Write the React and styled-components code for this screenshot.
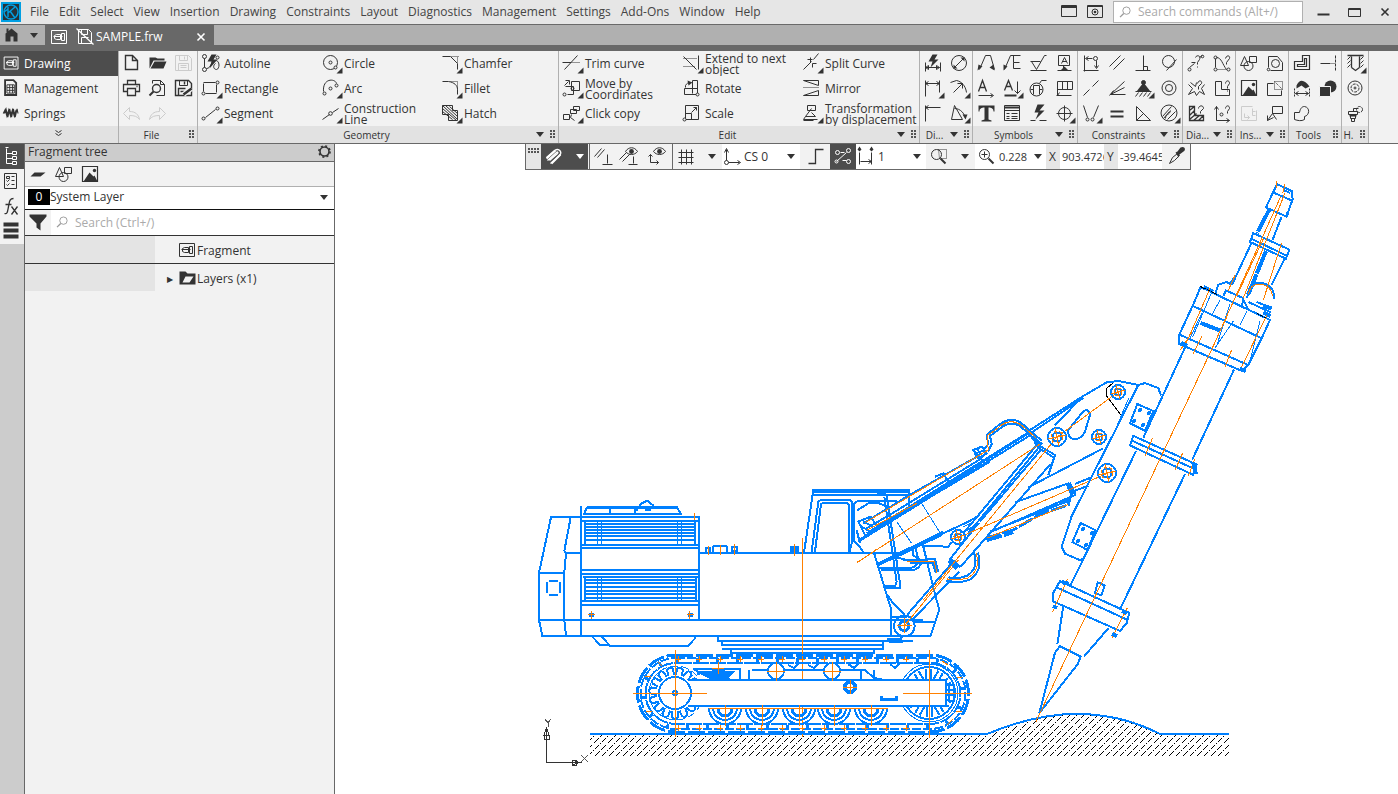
import React from "react";
import styled, { createGlobalStyle, css } from "styled-components";

const GlobalStyle = createGlobalStyle`
  * {
    box-sizing: border-box;
  }

  body {
    margin: 0;
    background: #fff;
    color: #333;
    font-family: "Open Sans", "Noto Sans", sans-serif;
    font-size: 12px;
    line-height: 16px;
  }

  button, input, select {
    margin: 0;
    padding: 0;
    border: 0;
    border-radius: 0;
    background: none;
    color: inherit;
    font: inherit;
  }
`;

/* Icons: every glyph is drawn on a 26 x 25 cell */

const solid = { fill: "currentColor", stroke: "none" };
const more = <path d="M25 17v6h-6z" {...solid} />;

const glyphs = {
  fragment: (
    <g>
      <path d="M5 6h15v13H5z M15 9h3v7h-3z M10 10h4v5h-4l-2-1v-3z" />
      <path d="M7 12h9" />
    </g>
  ),
  management: (
    <g>
      <path d="M6 4h9l3 3v13H6z" strokeWidth="2" />
      <path d="M8 9h8v9H8z M8 12h8 M8 15h8 M11 9v9 M14 9v9" />
    </g>
  ),
  springs: <path d="M5 13l2-5 2 9 2-9 2 9 2-9 2 9 2-9 1 5 M4 13l2-4 2 7 2-7 2 7 2-7 2 7 2-7" strokeWidth="1.2" />,
  home: <path d="M5 12l7-6 6 5v8h-4v-5h-3v5H6v-8z M7 6h2v4H7z" {...solid} />,
  chevrons: <path d="M10 5l3 2 3-2 M10 8l3 2 3-2" />,
  newDoc: <path d="M7 5h7l5 5v9H7z M14 5v5h5" strokeWidth="1.4" />,
  open: <path d="M5 7h6l2 1h7v2H9l-4 8z M10 11h12l-3 7H6z" {...solid} />,
  save: <path d="M5 5h13l3 3v12H5z M9 5v5h8V5 M14 6v3 M8 20v-7h10v7 M10 15h6 M10 17h6" />,
  print: <path d="M9 9V5h8v4 M9 16H5V9h16v7h-4 M9 13h8v7H9z M18 11h1" strokeWidth="1.3" />,
  preview: (
    <g>
      <path d="M8 8V5h8l4 4v11h-8 M16 5v4h4" />
      <circle cx="12" cy="13" r="4" strokeWidth="1.4" />
      <path d="M9 16l-4 4" strokeWidth="2" />
    </g>
  ),
  saveAs: (
    <g>
      <path d="M5 5h13l3 3v12H5z M8 20v-7h7" strokeWidth="1.4" />
      <path d="M9 5h8v5H9z" />
      <path d="M14 6v3 M10 16h4" strokeWidth="1.4" />
      <path d="M13 19l8-6" stroke="#f2f2f2" strokeWidth="5" />
      <path d="M13 19l8-6" strokeWidth="2.4" />
    </g>
  ),
  undo: <path d="M5 13l6-6v4c6 0 9 3 10 8-2-3-5-4-10-4v4z" />,
  redo: <path d="M21 13l-6-6v4c-6 0-9 3-10 8 2-3 5-4 10-4v4z" />,
  autoline: (
    <g>
      <circle cx="7" cy="6" r="2" /><circle cx="7" cy="19" r="2" /><circle cx="20" cy="7" r="1.5" />
      <path d="M7 8v9 M9 18c5 0 4-8 9-8s4 9 1 9-4-4-1-6" />
      <path d="M14 4h5l-3 5h4l-8 9 2-7h-4z" {...solid} />
    </g>
  ),
  rectangle: (
    <g>
      <path d="M6 7h12 M6 8v8 M19 9v8 M8 18h11" />
      <circle cx="20" cy="7" r="1.5" /><circle cx="6" cy="18" r="1.5" />{more}
    </g>
  ),
  segment: (
    <g>
      <path d="M8 17l10-8" />
      <circle cx="20" cy="8" r="1.5" /><circle cx="6" cy="18" r="1.5" />{more}
    </g>
  ),
  circle: (
    <g>
      <circle cx="13" cy="12" r="7" /><circle cx="13" cy="12" r="1.5" />
      <circle cx="18" cy="17" r="1.5" fill="#f2f2f2" />{more}
    </g>
  ),
  arc: (
    <g>
      <path d="M6 16c-1-14 12-13 13-8" /><circle cx="13" cy="13" r="1.5" />
      <circle cx="7" cy="18" r="1.5" /><circle cx="19" cy="10" r="1.5" />{more}
    </g>
  ),
  construction: (
    <g>
      <path d="M5 19l7-5 M15 12l6-4" /><circle cx="13" cy="13" r="1.8" />{more}
    </g>
  ),
  chamfer: (
    <g><path d="M5 6h8l7 7v6" /><path d="M14 6h7 M20 7v5" strokeDasharray="1 1" />{more}</g>
  ),
  fillet: (
    <g><path d="M5 6h6c6 1 9 4 9 8v5" /><path d="M13 6h7v8" strokeDasharray="1 1" />{more}</g>
  ),
  hatch: (
    <g>
      <path d="M5 5h10v5h5v10h-9v-6H5z" />
      <path d="M5 8l14 12 M5 11l10 8 M8 5l12 11 M12 6l8 7 M5 5l15 14" />{more}
    </g>
  ),
  trim: <g><path d="M6 19L19 5 M4 12h9" /><path d="M14 12h8" strokeDasharray="1 1" />{more}</g>,
  move: (
    <g>
      <path d="M13 6h8v9h-8z M7 11h8v8H9 M6 10l4-4 M7 5h4v4" />
      <circle cx="14" cy="13" r="1.5" /><circle cx="6" cy="19" r="1.5" />{more}
    </g>
  ),
  copy: (
    <g>
      <path d="M15 6h6v4h-6z M12 9h6v4h-6z M5 14h6v5H5z" />
      <path d="M13 14l-1 3 4 3" />{more}
    </g>
  ),
  extend: (
    <g>
      <path d="M5 6l13 13 M20 5v14" />
      <path d="M5 8h14 M5 16h12" strokeDasharray="1 1" />{more}
    </g>
  ),
  rotate: (
    <g>
      <path d="M14 5h5v14H6v-6h13 M14 5v13 M7 12v-2c1-2 3-3 4-3" />
      <circle cx="19" cy="19" r="1.5" fill="#f2f2f2" />
      <path d="M9 5l5 2-4 3z" {...solid} />
    </g>
  ),
  scale: (
    <g>
      <path d="M7 5h13v14H7z M7 13h6v6 M13 12l5-5 M15 7h3v3" />
      <circle cx="6" cy="19" r="1.5" fill="#f2f2f2" />
    </g>
  ),
  split: <g><path d="M5 19l8-8 M15 9l5-6 M9 9h5 M12 7v5 M14 17v-4h4" />{more}</g>,
  mirror: (
    <g>
      <path d="M5 5h15v5z M5 20h15v-5z" />
      <path d="M5 12h16" strokeDasharray="1 1" />
    </g>
  ),
  transform: (
    <g>
      <path d="M9 5h8v5H9z M13 8l-6 8h10l-4-4 M7 16l-2 3h14 M5 20h10" />{more}
    </g>
  ),
  dimAuto: (
    <g>
      <path d="M6 12v9 M21 12v9 M6 17h14 M6 17l3-2v4z M20 17l-3-2v4z" />
      <path d="M13 4h5l-3 5h4l-8 8 2-6H9z" {...solid} />
    </g>
  ),
  diameter: <g><circle cx="13.5" cy="12.5" r="7.5" /><path d="M8 18L19 7" /><path d="M8 18v-4l4 4z M19 7h-4l4 4z" {...solid} /></g>,
  dimLinear: <g><path d="M6 5v16 M20 5v12 M6 8h14 M9 6L6 8l3 2 M17 6l3 2-3 2" />{more}</g>,
  dimRadial: <g><path d="M5 7l6-2c5 1 9 5 10 12 M8 17l9-9 M12 8h5v5" />{more}</g>,
  dimBreak: <path d="M6 5v16 M6 7h15 M9 5L6 7l3 2" />,
  dimAngle: <g><path d="M6 19L9 5l8 14z M9 8c6 0 10 5 11 10" /><path d="M17 14l3 5 2-5z" {...solid} />{more}</g>,
  leader: <g><path d="M7 19L13 5h5l4 14" /><path d="M5 20l1-6 4 2z M22 20l-5-3 4-3z" {...solid} /></g>,
  leaderE: <g><path d="M6 19L12 5h10 M13 12h7 M15 5v14" stroke="none" /><path d="M6 19L12 5h10 M15 5v7h6 M15 12v6h7" /><path d="M5 20l0-6 4 2z" {...solid} /></g>,
  roughness: <path d="M6 11h10 M7 11l5 8 8-14h2 M6 20h16" />,
  datum: <g><path d="M8 5h11v10H8z M13 15v4 M7 20h14" /><path d="M11 13l3-6 3 6 M12 11h4" /><path d="M10 20l4-4 4 4z" {...solid} /></g>,
  textA: <g><path d="M6 16l4-11 4 11 M7 12h6" strokeWidth="1.3" /><path d="M6 20h14 M18 18l3 2-3 2" /></g>,
  textDown: <g><path d="M6 15l4-10 4 10 M7 11h6" strokeWidth="1.3" /><path d="M19 6v12 M16 15l3 3 3-3" /><path d="M6 19h12v2H6z" {...solid} />{more}</g>,
  balloon: <g><circle cx="12" cy="14" r="6.5" /><path d="M9 19v-9h6v9 M6 14h3 M15 14h3 M15 8l2-3h5" /></g>,
  flag: <path d="M7 20V6h15v8H7 M12 6v8 M17 6v8 M6 20h15 M9 17l-2 3h4" />,
  letterT: <path d="M6 5h16v6h-1c0-3-2-4-5-4v12l3 1v1H9v-1l3-1V7c-3 0-5 1-5 4H6z" {...solid} />,
  table: <g><path d="M6 5h15v15H6z M6 10h15 M8 13h3 M13 13h6 M8 16h3 M13 16h6 M8 18h3 M13 18h6" /><path d="M6 7h15" strokeWidth="2" /></g>,
  bolt: <g><path d="M13 4h7l-5 6h5l-9 9 3-7h-4z" {...solid} /><path d="M6 20h5 M15 20h7" /></g>,
  target: <g><circle cx="14" cy="13" r="6" /><path d="M6 13h16 M14 5v16" />{more}</g>,
  conAlign: <g><path d="M7 5v16 M6 20h15 M9 8h6 M11 6L8 8l3 2 M19 10v7 M17 15l2 3 2-3" /><circle cx="18" cy="8" r="2" /></g>,
  conParallel: <path d="M6 16L17 5 M10 19L21 8" />,
  conPerp: <path d="M14 5v15 M6 20h15 M14 16h4v4" />,
  conTangent: <g><circle cx="13" cy="11" r="6" /><path d="M11 20L21 9" /></g>,
  conCollinear: <path d="M6 20l6-6 M15 11l6-6" />,
  conFan: <path d="M21 6L7 19h15 M21 12L7 19 M10 15l-4 5" />,
  conFix: <g><path d="M14 7l7 9H7z" {...solid} /><circle cx="14" cy="7" r="2" fill="#333" /><path d="M6 16h16 M9 17l-3 4 M13 17l-3 4 M17 17l-3 4 M21 17l-3 4" />{more}</g>,
  conCircles: <g><circle cx="13.5" cy="12.5" r="7" /><circle cx="13.5" cy="12.5" r="3.5" /></g>,
  conEnds: <g><path d="M6 5l4 12 M21 5l-5 12" /><circle cx="10" cy="19" r="1.5" /><circle cx="15" cy="19" r="1.5" />{more}</g>,
  conEqual: <path d="M7 10h13v2H7z M7 15h13v2H7z" {...solid} />,
  conTriangle: <path d="M7 6v14h14z M7 20l7-7" />,
  conHatch: <g><circle cx="13.5" cy="12.5" r="8" /><path d="M7 16l9-10 M8 18l6-7 M12 19l8-8 M10 18c0-5 4-3 5-8" />{more}</g>,
  diaLine: <g><path d="M7 17l5-4 M9 12h4 M17 7l3-2 M13 7c1-3 6-2 4 2l-2 3v2 M15 16v1" /><circle cx="7" cy="19" r="1.5" /><circle cx="20" cy="6" r="1.3" /></g>,
  diaPoly: <g><path d="M7 8v9 M8 7c5 0 6 7 10 12 M17 8c1-4 5-3 4 0l-3 4v2" /><circle cx="7" cy="7" r="1.5" /><circle cx="7" cy="19" r="1.5" /><circle cx="20" cy="19" r="1.5" /><path d="M9 19h9" strokeDasharray="1 1" /></g>,
  diaStar: <path d="M8 7l5 4 1-4 M6 9l4 4-4 6 6-3 2 4 3-4 5 3-3-6 3-4 M15 8c1-4 5-3 4 0l-3 3v3" />,
  diaArea: <path d="M7 6h6v8h8v6H7z M17 8c0-3 4-4 4 0l-2 3v2 M19 15v1" />,
  diaHatch: <g><path d="M7 6h5v9h9v5H7z M7 10l5-4 M7 15l5-5 M7 19l7-6 M11 20l6-5 M16 20l5-5" strokeWidth="1.3" /><path d="M16 8c0-3 5-4 5 0l-3 3v2" /></g>,
  diaAxis: <g><path d="M8 6v14h13 M6 9l2-3 2 3 M18 18l3 2-3 2 M17 8c0-3 4-4 4 0l-2 3v2" /><circle cx="13" cy="14" r="1.5" /></g>,
  shapes: <g><path d="M9 6l4 9H5z M14 6h7v6h-7z" /><circle cx="13" cy="15.5" r="4.5" /></g>,
  insView: <g><circle cx="14" cy="13" r="4" /><path d="M7 17V6h9l5 6v8H9" /><circle cx="7" cy="19" r="1.3" /></g>,
  picture: <g><path d="M6 5h15v15H6z" strokeWidth="1.2" /><path d="M7 20l6-9 4 4 1-1 3 6z" {...solid} /><circle cx="18" cy="9" r="1.7" {...solid} /></g>,
  insRegion: <g><path d="M12 8H6v12h14v-5" /><path d="M13 6h8v8h-8z M13 6l8 8" strokeDasharray="1 1" /></g>,
  insLayout: <g><path d="M6 6h11 M6 6v14h15V10" /><path d="M9 13v4h5 M12 15l2 2-2 2 M17 8v7h3 M17 11h3" /></g>,
  insCallout: <path d="M11 6h10v7H11z M11 13l-5 7 M11 13l4 6 M6 15v5l6-3" />,
  toolOffset: <path d="M14 5h7v14H6v-8h8z M16 8h2v8H9v-2h7z" strokeWidth="1.2" />,
  toolAxis: <g><path d="M6 13h10" /><path d="M17 13h4" strokeDasharray="1 1" /><path d="M21 5v15" strokeDasharray="3 1" /></g>,
  toolDims: <g><path d="M8 10c3-7 8-6 13 1l-4 2-4-3-5 3z" {...solid} /><path d="M6 13v8 M21 13v8" strokeDasharray="2 1" /><path d="M7 18h13 M10 16l-3 2 3 2 M17 16l3 2-3 2" /></g>,
  toolBool: <g><circle cx="16" cy="11" r="6" {...solid} /><path d="M5 11h11v10H5z" stroke="#f2f2f2" fill="#333" /></g>,
  toolContour: <path d="M6 12h5c1-5 3-6 5-6 6 1 5 9 0 10v3c-3 2-7 1-10 0z" />,
  holeHatch: <g><path d="M6 5h16 M10 6v11 M18 6v11 M10 17l4 3 4-3" strokeWidth="1.3" /><path d="M6 9l3-3 M6 13l3-3 M6 17l3-3 M19 9l3-3 M19 13l3-3 M19 17l3-3" />{more}</g>,
  holeTop: <g><circle cx="13.5" cy="12.5" r="7" /><circle cx="13.5" cy="12.5" r="4" strokeDasharray="3 1" /><path d="M13.5 11v3 M12 12.5h3" /></g>,
  holeBolt: <g><path d="M7 11h9v3H7z M9 14v4h5v-4 M10 18v3h3v-3 M12 11V8h5" /><circle cx="18" cy="9" r="3" strokeDasharray="3 1" /><path d="M8 15h7" strokeWidth="2" /></g>,
  tree: <path d="M6 4v15h6 M6 9h6 M6 14h6 M5 3h3 M12 7h4v3h-4z M12 12h4v3h-4z M12 17h4v3h-4z" transform="translate(1 1)" />,
  props: <path d="M5 5h12v15H5z M7 8h3v2H7z M12 8h3 M12 12h3 M12 16h3 M7 12l1 1 2-2 M7 16l1 1 2-2" />,
  fx: <g><path d="M5 20c3 1 3-2 4-7s1-8 5-8 M6 11h6" strokeWidth="1.3" /><path d="M12 13l6 8 M18 13l-6 8" strokeWidth="1.3" /></g>,
  menu: <path d="M4 4h15v4H4z M4 10h15v4H4z M4 16h15v4H4z" {...solid} />,
  layer: <path d="M6 15l4-4h11l-5 4z" {...solid} />,
  funnel: <path d="M5 5h17v2l-6 7v7l-4-3v-4L5 7z" {...solid} />,
  folder: <g><path d="M5 6h6l2 2h8v11H5z" {...solid} /><path d="M11 11h8l-4 6H8z" fill="#f2f2f2" stroke="none" /></g>,
  magnet: <g><path d="M6 14l8-7c5-3 8 2 5 5l-9 8 M9 17l8-7c1-1 0-2-1-1l-9 8" strokeWidth="1.3" /><path d="M6 15l9-8 M11 20l9-9" strokeWidth="2" /></g>,
  parPerp: <path d="M5 13l7-8 M8 14l7-8 M18 11v9 M13 21h10" />,
  eyePar: <g><path d="M4 16l8-8 M7 18l8-8 M18 13v7 M13 21h9" /><path d="M10 8c3-5 9-5 12 0-3 4-9 4-12 0z" fill="#f2f2f2" /><circle cx="16" cy="8" r="2.4" {...solid} /></g>,
  eyeAxis: <g><path d="M7 11v8h8 M5 13l2-2 2 2 M13 17l2 2-2 2" /><path d="M10 8c3-5 9-5 12 0-3 4-9 4-12 0z" /><circle cx="16" cy="8" r="2.4" {...solid} /></g>,
  grid: <path d="M6 9h15 M6 14h15 M6 19h15 M9 6v15 M14 6v15 M19 6v15" />,
  axes: <g><path d="M7 6v11 M9 19h11 M5 9l2-4 2 4 M18 17l3 2-3 2" /><circle cx="7" cy="19" r="2" /></g>,
  step: <path d="M5 20h7V6h8" strokeWidth="1.3" />,
  snaps: <g><circle cx="8" cy="9" r="2" /><circle cx="19" cy="7" r="2" /><circle cx="19" cy="18" r="2" /><path d="M7 18l10-9 M13 17h4 M11 9h4" /><circle cx="7" cy="18" r="1.5" /></g>,
  pitch: <g><path d="M6 9v12 M18 9v12 M7 18h11 M15 16l3 2-3 2" /><path d="M6 3l2 3-2 2-2-2z M18 3l2 3-2 2-2-2z" {...solid} /></g>,
  zoomArea: <g><circle cx="11" cy="11" r="5" /><path d="M15 15l5 5" strokeWidth="2" /><path d="M13 6h8v9h-7z" strokeDasharray="1 1" /></g>,
  zoomIn: <g><circle cx="12" cy="11" r="5" /><path d="M12 8v6 M9 11h6" /><path d="M16 15l5 5" strokeWidth="2" /></g>,
  dropper: <g><path d="M6 20l3-6 5-4 2 2-5 5z" /><path d="M12 9l2-1 3-4c4-2 6 2 3 4l-4 3-1 3z" {...solid} /></g>,
  search: <g><circle cx="14" cy="11" r="4" /><path d="M11 14l-4 4" strokeWidth="1.4" /></g>,
  gear: <g><circle cx="13" cy="12" r="4.5" strokeWidth="1.6" /><circle cx="13" cy="12" r="5.6" strokeWidth="1.6" strokeDasharray="2 2.4" /></g>,
  unsaved: <g><path d="M6 5h10l3 3v11H6z M9 5v5h6V5 M9 19v-6h7" /><path d="M4 4l17 16" strokeWidth="1.2" /></g>,
  window: <path d="M6 6h15v11H6z M6 7h15 M6 8h15" />,
  windowEye: <g><path d="M6 6h15v12H6z M6 7h15" /><circle cx="13.5" cy="12.5" r="3" /><circle cx="13.5" cy="12.5" r="1.3" {...solid} /></g>,
  minimize: <path d="M8 14h12v2H8z" {...solid} />,
  maximize: <path d="M8 9h12v8H8z M8 10h12" />,
  close: <path d="M10 9l7 7 M17 9l-7 7" strokeWidth="1.6" />
};

const Glyph = styled.svg`
  display: block;
  flex: none;
  width: 26px;
  height: 25px;
  fill: none;
  stroke: currentColor;
`;

function Icon({ name }) {
  return (
    <Glyph viewBox="0 0 26 25" aria-hidden="true">
      <g transform="translate(-.5 -.5)">{glyphs[name]}</g>
    </Glyph>
  );
}

const Caret = styled.span`
  flex: none;
  width: 0;
  height: 0;
  margin: 0 1px;
  border: solid transparent;
  border-width: 5px 4px 0;
  border-top-color: currentColor;
`;

/* Window frame */

const Page = styled.div`
  display: flex;
  flex-direction: column;
  min-height: 100vh;
`;

const MenuBar = styled.header`
  display: flex;
  align-items: center;
  height: 25px;
  background: #e6e6e6;
  border-bottom: 1px solid #6a6a6a;
`;

const Logo = styled.svg`
  flex: none;
  width: 20px;
  height: 20px;
  margin: 0 9px 0 1px;
`;

const MenuList = styled.nav`
  display: flex;
  flex: 1;
  gap: 10px;
  color: #444;
  white-space: nowrap;
`;

const SearchField = styled.label`
  display: flex;
  align-items: center;
  height: ${props => (props.$framed ? "22px" : "25px")};
  width: ${props => (props.$framed ? "190px" : "auto")};
  flex: ${props => (props.$framed ? "none" : "1")};
  border: ${props => (props.$framed ? "1px solid #b0b0b0" : "0")};
  background: #fff;
  color: #999;

  svg {
    width: 24px;
    height: 23px;
  }

  input {
    flex: 1;
    min-width: 0;
    outline: 0;
  }

  input::placeholder {
    color: #aaa;
    opacity: 1;
  }
`;

const WindowButtons = styled.div`
  display: flex;
  gap: ${props => props.$gap || "0"};
  margin-left: ${props => props.$before || "0"};
  margin-right: ${props => props.$after || "0"};
`;

const TabStrip = styled.div`
  display: flex;
  height: 26px;
  background: #b0b0b0;
  border-bottom: 6px solid #686868;
`;

const HomeButton = styled.button`
  display: flex;
  align-items: center;
  gap: 3px;
  width: 45px;
  height: 20px;
`;

const Tab = styled.div`
  display: flex;
  align-items: center;
  width: 169px;
  height: 24px;
  padding-left: 2px;
  background: #686868;
  color: #fff;

  span {
    flex: 1;
    margin-left: -3px;
  }
`;

/* Ribbon */

const Ribbon = styled.div`
  display: flex;
  height: 93px;
  background: #f2f2f2;
  border-bottom: 1px solid #686868;
`;

const Modes = styled.div`
  display: flex;
  flex-direction: column;
  width: 119px;
  border-right: 1px solid #b0b0b0;
`;

const ModeButton = styled.button`
  display: flex;
  align-items: center;
  height: 25px;
  line-height: 14px;
  color: ${props => (props.$active ? "#fff" : "#333")};
  background: ${props => (props.$active ? "#4d4d4d" : "transparent")};

  svg {
    width: 24px;
  }
`;

const ModeMore = styled.button`
  display: flex;
  justify-content: center;
  height: 17px;
  background: #e2e2e2;
  overflow: hidden;
`;

const Group = styled.section`
  display: flex;
  flex-direction: column;
  border-right: 1px solid #b0b0b0;
`;

const Tools = styled.div`
  display: grid;
  grid-template-columns: repeat(${props => props.$columns}, ${props => (props.$wide ? "120px" : "26px")});
  grid-template-rows: repeat(3, 25px);
`;

const ToolButton = styled.button`
  display: flex;
  align-items: center;
  overflow: hidden;
  color: ${props => (props.$muted ? "#ccc" : "#333")};
  text-align: left;
  line-height: 11px;
  white-space: pre;
`;

const GroupFooter = styled.footer`
  display: flex;
  align-items: center;
  height: 17px;
  padding-right: 3px;
  background: #e2e2e2;
  font-size: 10px;

  span:first-child {
    flex: 1;
    min-width: 0;
    text-align: center;
  }
`;

const Grip = styled.i`
  flex: none;
  width: ${props => (props.$flat ? "11px" : "5px")};
  height: ${props => (props.$flat ? "5px" : "9px")};
  margin-left: ${props => (props.$flat ? "0" : "5px")};
  background: radial-gradient(circle at 1px 1px, #555 1px, transparent 1px) 0 0 / 3px 3px;
`;

/* Side panel */

const Workspace = styled.div`
  display: flex;
  flex: 1;
`;

const SideStrip = styled.div`
  width: 25px;
  background: #ccc;
  border-right: 1px solid #686868;
`;

const SideButton = styled.button`
  display: block;
  width: 24px;
  height: 25px;
  overflow: hidden;
  color: ${props => (props.$active ? "#fff" : "#333")};
  background: ${props => (props.$active ? "#4d4d4d" : "#f2f2f2")};
`;

const Panel = styled.aside`
  width: 310px;
  background: #f2f2f2;
  border-right: 1px solid #686868;
`;

const PanelTitle = styled.h2`
  display: flex;
  align-items: center;
  justify-content: space-between;
  height: 18px;
  margin: 0;
  padding: 0 0 1px 3px;
  overflow: hidden;
  background: #ccc;
  border-bottom: 1px solid #686868;
  font-size: 12px;
  font-weight: 400;

  button {
    margin-right: -4px;
  }
`;

const PanelTools = styled.div`
  display: flex;
  height: 24px;
`;

const LayerPicker = styled.label`
  display: flex;
  align-items: center;
  height: 24px;
  padding: 0 5px 2px 3px;
  background: #fff;
  border-top: 1px solid #b0b0b0;
  border-bottom: 1px solid #111;
`;

const LayerNumber = styled.span`
  width: 22px;
  height: 16px;
  background: #000;
  color: #fff;
  text-align: center;
`;

const Select = styled.select`
  appearance: none;
  flex: 1;
  min-width: 0;
  outline: 0;
`;

const FilterRow = styled.div`
  display: flex;
  height: 26px;
  border-bottom: 1px solid #333;
`;

const TreeRow = styled.div`
  display: grid;
  grid-template-columns: 130px 1fr;
  height: ${props => (props.$ruled ? "28px" : "27px")};
  background: #e4e4e4;
  border-bottom: 1px solid ${props => (props.$ruled ? "#333" : "#e4e4e4")};
`;

const TreeItem = styled.div`
  display: flex;
  grid-column: 2;
  align-items: center;
  padding-top: 2px;
  padding-left: ${props => (props.$leaf ? "20px" : "0")};
  background: #f2f2f2;

  svg {
    margin-right: -4px;
  }
`;

const Expander = styled.button`
  width: 20px;
  padding-left: 10px;
  font-size: 8px;
`;

/* Canvas */

const Canvas = styled.main`
  position: relative;
  flex: 1;
  min-width: 0;
  background: #fff;
`;

const QuickBar = styled.div`
  position: absolute;
  top: 0;
  left: 190px;
  display: flex;
  height: 26px;
  background: #f2f2f2;
  border: solid #686868;
  border-width: 0 1px 1px;
`;

const QuickButton = styled.button`
  display: flex;
  align-items: center;
  width: ${props => props.$width || "26px"};
  padding-left: ${props => props.$pad || "0"};
  gap: 8px;
  overflow: hidden;

  ${props =>
    props.$active &&
    css`
      background: #4d4d4d;
      color: #fff;
    `}
`;

const QuickDivider = styled.i`
  width: 1px;
  margin-left: ${props => (props.$apart ? "1px" : "0")};
  background: #686868;
`;

const QuickGrip = styled.div`
  width: 15px;
  padding: 4px 2px;
  background: #e6e6e6;
`;

const QuickField = styled.label`
  display: flex;
  align-items: center;
  width: ${props => props.$width};
  padding-right: 4px;
  background: #fff;

  svg {
    margin: 0 -2px;
  }
`;

const Coordinate = styled.label`
  display: flex;
  align-items: center;
  padding-left: 3px;
  gap: 3px;
  background: #e6e6e6;

  span {
    width: 8px;
  }

  input {
    width: 44px;
    height: 25px;
    padding-left: 2px;
    background: #fff;
    font-size: 11px;
  }
`;

const ZoomInput = styled.input`
  width: 28px;
  margin-left: 2px;
  margin-right: 6px;
  font-size: 11px;
`;

const Sheet = styled.svg`
  display: block;
  width: 100%;
  fill: none;
  stroke: #0080ff;
  stroke-width: 2;
  shape-rendering: crispEdges;

  path, circle, ellipse {
    vector-effect: non-scaling-stroke;
  }
`;

const Axis = styled.g`
  stroke: #ff8000;
  stroke-width: 1;
`;

const Fine = styled.g`
  stroke-width: 1;
`;

function Ring({ x, y, r }) {
  return (
    <g>
      <circle cx={x} cy={y} r={r} />
      <circle cx={x} cy={y} r={r / 2} />
      <Axis>
        <path d={`M${x - r} ${y + 2}L${x + r} ${y - 2}M${x - 2} ${y - r}L${x + 2} ${y + r}`} />
        <circle cx={x} cy={y} r={r - 3} strokeDasharray="3 3" />
      </Axis>
    </g>
  );
}

function Ground() {
  const lines = [];
  for (let x = 560; x < 1240; x += 7) {
    lines.push(
      <path key={x} d={`M${x} 756L${x + 44} 712`} strokeDasharray={x % 2 ? "7 2" : "5 2 1 2"} />
    );
  }
  return (
    <g>
      <clipPath id="soil">
        <path d="M590 734H987Q1060 708 1100 715Q1135 718 1160 734H1229V756H590z" />
      </clipPath>
      <g clipPath="url(#soil)" stroke="#000" strokeWidth="1">{lines}</g>
      <path d="M590 734H987C1025 718 1060 713 1085 714C1118 716 1140 724 1160 734H1229" />
    </g>
  );
}

function Engine() {
  return (
    <g transform="translate(530 480) scale(.3333)">
      <path d="M152 112H63L27 278V420L37 467H1180 M152 78V467 M122 112L103 212L108 219H155 M108 219L103 278V420L108 467 M27 278H103 M27 420H1180" />
      <path d="M152 112H508V420 M508 219H1120 M155 195H508 M155 204H508 M155 122H508 M155 270H508 M155 281H508 M155 363H508 M155 375H508" />
      <path d="M165 122V195 M495 122V195 M165 290V363 M497 290V363 M158 290H508" />
      <path d="M165 132H495 M165 141H495 M165 150H495 M165 159H495 M165 169H495 M165 179H495 M165 301H497 M165 310H497 M165 322H497 M165 332H497 M165 343H497 M165 353H497" />
      <Fine>
        <path d="M203 122V195 M215 122V195 M444 122V195 M454 122V195 M203 290V363 M215 290V363 M444 290V363 M454 290V363" />
      </Fine>
      <path d="M170 83H444" strokeWidth="3" />
      <path d="M170 82L163 102 M440 82L455 105 M160 102H455 M240 82V102 M314 82V99 M322 82V92 M325 82L335 70L352 62L368 75V82 M345 90H362" />
      <path d="M58 302H84 M51 307V340 M90 307V340 M58 345H84" />
      <path d="M187 470L210 495H238L215 470 M238 497H475L498 472" />
      <path d="M565 470V482H1150 M577 482V494H1058V482 M577 506H1058V494 M604 507V519H1032V507 M650 482H1148" />
      <path d="M527 218V204H540V218 M550 218V200L556 197H588L592 203V218 M605 200H622V214H605z" />
      <path d="M178 406H192 M474 406H488" strokeWidth="4" />
      <Axis>
        <path d="M173 405H196 M184 394V416 M470 405H492 M480 394V416 M535 197V224 M572 194V224 M613 192V224 M495 98V120" />
      </Axis>
    </g>
  );
}

function Cabin() {
  return (
    <g transform="translate(750 480) scale(.3333)">
      <path d="M162 218L190 30H476V90 M188 37H476 M188 44H480 M162 218H372L424 390V467H542L568 390L555 342L520 200" />
      <path d="M185 215L205 65L213 59H298L305 66V190L298 217 M195 215L213 72L220 68H290L296 74V215 M313 185V70L325 62H440 M320 92L355 70Q390 62 410 84 M313 185L325 195L340 216" />
      <path d="M380 44Q395 32 410 46L450 310V325H405 M403 50L440 305L436 318H403" />
      <path d="M390 263H470Q500 268 505 240L497 205 M392 271H480Q512 270 515 242L488 225V205 M440 232L470 240" />
      <path d="M408 340L430 370L465 405 M424 410H470 M495 427H555 M412 478H448L458 470" />
      <path d="M412 476H456 M418 486H460" />
      <path d="M605 250L472 404 M628 274L488 418" />
      <path d="M125 205H142V215H125z M128 210H140" strokeWidth="4" />
      <circle cx="463" cy="438" r="31" />
      <circle cx="463" cy="438" r="14" strokeWidth="3" />
      <Axis>
        <path d="M157 175V770 M133 192V227 M440 438H486 M463 415V460 M322 248L380 208 M625 240L463 438" />
      </Axis>
    </g>
  );
}

const rollers = [725, 762, 799, 834, 871];
const links = [678, 699, 720, 740, 761, 782, 802, 824, 844, 865, 886, 906];

function around(count, x, y, d) {
  return Array.from({ length: count }, (_, i) => (
    <path key={i} d={d} transform={`translate(${x} ${y}) rotate(${(i * 360) / count})`} />
  ));
}

function Tracks() {
  return (
    <g>
      <path d="M676 655H930A38 38 0 0 1 930 732H676A38 38 0 0 1 676 655z" strokeWidth="3" strokeDasharray="17 3" />
      <path d="M676 658H930A35 35 0 0 1 930 729H676A35 35 0 0 1 676 658z" strokeDasharray="9 2" />
      <path d="M676 663H930A30 30 0 0 1 930 724H676A30 30 0 0 1 676 663z" strokeDasharray="16 1" />
      <path d="M676 660H930A33 33 0 0 1 930 727H676A33 33 0 0 1 676 660z" strokeWidth="5" strokeDasharray="3 17" />
      <circle cx="676" cy="693" r="27" strokeWidth="1" strokeDasharray="8 3" />
      {around(15, 675, 693, "M-3 18V24Q0 28 3 24V18")}
      <path d="M688 680H944V706H688" fill="#fff" />
      <circle cx="675" cy="693" r="16" fill="#fff" />
      <circle cx="675" cy="693" r="2" />
      <circle cx="929" cy="693" r="29" strokeWidth="1" />
      <circle cx="929" cy="693" r="26" />
      {around(12, 929, 693, "M-2 10V24 M3 10V24")}
      <path d="M890 681H946V705H890z" fill="#fff" stroke="none" />
      <path d="M880 680H946V706H880 M949 685H954V701H949z" />
      {rollers.map(x => (
        <g key={x}>
          <path d={`M${x - 16} 708A16 16 0 0 0 ${x + 16} 708`} />
          <path d={`M${x - 12} 708A12 12 0 0 0 ${x + 12} 708`} />
          <path d={`M${x - 7} 709A7 7 0 0 0 ${x + 7} 709`} strokeWidth="3" />
        </g>
      ))}
      <path d="M693 669L710 678L730 679 M694 669H740V680 M749 670V680 M752 670H865L874 678 M861 671V680 M874 670V678L884 680 M697 674L728 669" />
      <path d="M700 672H733L728 677H710z" fill="#0080ff" />
      {[776, 832].map(x => <circle key={x} cx={x} cy="671" r="8" fill="#fff" />)}
      <path d="M788 665L794 668L798 664 M808 665L814 668L818 664 M848 664L854 668L858 664 M890 664L895 668L899 664" />
      <circle cx="850" cy="687" r="5" strokeWidth="4" />
      <path d="M881 696V699H896V696" strokeWidth="3" />
      <Axis>
        <path d="M633 693H707 M675 650V737 M903 693H972 M929 650V738 M709 708H888 M767 671H785 M776 662V681 M823 671H841 M832 662V681 M718 662V674 M712 668H724 M843 687H857 M850 680V694" />
        {rollers.map(x => <path key={x} d={`M${x} 705V726`} />)}
        {links.map(x => (
          <path key={x} d={`M${x} 656V662 M${x - 3} 659H${x + 3} M${x} 725V731 M${x - 3} 728H${x + 3}`} />
        ))}
        <path d="M643 693H651 M645 676H651 M646 711H652 M658 662L662 666 M942 661L948 665 M957 677H962 M960 693H968 M956 711H962 M947 725L953 719" />
      </Axis>
    </g>
  );
}

function Boom() {
  return (
    <g>
      <g transform="translate(840 370) scale(.3333)">
        <path d="M570 180L730 78L800 37L835 33L895 45 M575 187L730 84 M730 78L645 165" />
        <path d="M60 508L565 190 M55 515L570 196 M70 460L160 405L200 380L420 255 M75 478L160 428L420 268 M80 490L570 184 M120 470L450 275" />
        <path d="M55 455L92 440L115 475L78 500z M70 455L100 470 M62 468L90 485 M50 480L60 520 M285 320L310 310L330 345 M405 245L430 275" />
        <path d="M400 240L425 230L440 250L415 265z M410 236L430 262 M403 252L430 242" />
        <path d="M115 580L310 485 M115 586L310 490 M150 570L305 495 M310 490L385 455L420 435" />
        <path d="M245 528L325 530L335 515 M565 352L790 235 M625 315L645 255L590 222L570 195 M598 235L640 262" />
        <path d="M590 225L370 490 M597 232L385 490 M604 238L420 455" />
        <path d="M580 205L605 225 M585 215L600 235" strokeWidth="4" />
        <path d="M632 282L362 590 M415 460L332 565L362 592" />
        <path d="M330 565L355 590 M326 572L350 596" strokeWidth="3" />
        <path d="M525 397L685 340L705 375L450 487 M690 338L706 372 M680 342L695 378 M705 342L752 323 M705 362L745 347 M450 485L685 393" />
        <path d="M685 345L702 372" strokeWidth="4" />
        <path d="M435 505L520 480L600 433L685 405L688 390L640 405 M440 512L520 488" strokeWidth="3" strokeDasharray="16 2" />
        <path d="M430 240L445 222L440 195L470 170Q510 135 545 160L605 212 M445 245L455 222L450 198L478 177Q510 150 540 168L600 220" />
        <path d="M402 548Q418 595 380 618Q350 628 325 622 M414 548Q430 605 388 630Q350 642 318 632" />
        <path d="M190 570L285 568L295 605 M210 580L278 578L288 610" />
        <path d="M685 180L728 126Q745 112 750 135L735 185Q722 210 700 208Q682 200 685 180z" />
        <Fine>
          <path d="M245 400L300 488 M170 455L215 520 M830 170L866 85 M340 500L420 460 M370 470L400 455 M375 485L405 470" />
          <path d="M820 38L800 55L798 75L842 134" stroke="#000" />
        </Fine>
        <Axis>
          <path d="M50 578L600 222 M650 202L833 67 M650 202L250 690 M350 505L802 310 M75 458L445 240L441 198L476 172Q510 142 545 166L590 205 M82 480L230 400 M440 505L685 403 M408 550Q424 600 384 624Q350 634 322 627 M200 574H282L291 608" />
        </Axis>
      </g>
      <Ring x={1118} y={392} r={7} />
      <Ring x={1057} y={437} r={9} />
      <Ring x={1099} y={437} r={7} />
      <Ring x={1107} y={473} r={9} />
      <Ring x={958} y={537} r={7} />
    </g>
  );
}

function Drill() {
  return (
    <g>
      <g transform="translate(1030 170) scale(.3333 .3825)">
        <path d="M325 562L345 557L385 570L393 590 M325 562L125 905L95 985L105 1003L150 1020L162 1016" />
        <path d="M470 455L340 700 M318 735L122 1085 M612 522L487 757 M465 795L272 1145" />
        <path d="M310 695L500 770L490 797L300 720z M307 708L497 783" />
        <path d="M90 1075L298 1158L290 1185L270 1205L70 1128V1105z M82 1092L290 1175" />
        <path d="M100 1140L82 1240 M235 1198L162 1272 M90 1245L152 1272L143 1292L28 1420L75 1262z" />
        <path d="M203 1078L224 1086L214 1112L195 1106z" />
        <path d="M322 612L370 630L345 682L300 662z M152 923L197 942L172 993L127 973z" />
        <path d="M512 306L720 392L695 440L488 355z M488 355L448 430V455L635 525L655 510L695 440 M448 430L655 510 M540 318L720 392" />
        <path d="M545 320L488 437 M515 375L480 440 M570 340L545 380 M600 350L560 460 M650 370L630 405 M690 395L660 500 M610 395L555 465" strokeWidth="1" />
        <path d="M512 400L572 420" strokeWidth="4" />
        <path d="M520 306L550 318 M700 372L722 382 M700 355L725 362" strokeWidth="4" />
        <path d="M555 325L565 300L590 293L605 300 M580 330L588 315L640 335L635 360 M600 298L615 278 M652 335Q655 292 690 295Q735 298 732 338 M655 345L722 372 M680 345L722 360 M640 340L655 365" />
        <path d="M665 190L606 300 M765 230L725 300 M755 122L728 182" />
        <path d="M708 212L655 325 M717 105L682 165" strokeWidth="4" strokeDasharray="24 1" />
        <path d="M670 165L778 208L768 232L660 188z M665 180L770 224" />
        <path d="M742 37L785 55L788 76L770 122L708 98L730 57z M728 58L786 80 M760 52L780 60 M768 112L776 116" />
        <Axis>
          <path d="M18 1442L550 460L752 70 M565 430L590 385 M640 335L765 60 M465 460L540 310 M635 515L710 380 M620 330L700 180 M700 340L755 190 M595 315L615 275" />
          <path d="M345 748L368 700 M435 785L458 740 M475 800L495 755 M68 1155L112 1070 M245 1225L292 1145 M452 470L485 425 M490 480L515 435 M585 515L605 470 M740 30V48 M765 38L758 60 M655 325Q660 298 690 299Q722 300 728 330" />
        </Axis>
        <path d="M510 304L560 325 M680 375L710 388" stroke="#000" strokeWidth="1" strokeDasharray="3 1" />
      </g>
      {[[1140, 410], [1149, 413], [1134, 421], [1143, 425], [1083, 529], [1092, 533], [1078, 541], [1086, 545]].map(
        ([x, y]) => <circle key={`${x}-${y}`} cx={x} cy={y} r="1" />
      )}
      <path d="M1053 606L1057 608 M1112 634L1117 636 M1062 582L1069 584 M1122 611L1127 613 M1181 343L1186 345 M1240 369L1246 371 M1193 462L1196 474" strokeWidth="4" />
    </g>
  );
}

function Origin() {
  return (
    <g stroke="#333" strokeWidth="1">
      <path d="M546.5 729V762.5H581 M544 735L546.5 728L549 735z M572 760L580 762.5L572 765z M544 735h5v4h-5z M572 760h4v5h-4z" />
      <path d="M581 755L588 762 M588 755L581 762 M545 719L548 723V727 M551 719L548 723" stroke="#555" />
    </g>
  );
}

const menus = [
  "File", "Edit", "Select", "View", "Insertion", "Drawing", "Constraints", "Layout",
  "Diagnostics", "Management", "Settings", "Add-Ons", "Window", "Help"
];

const groups = [
  {
    label: "File", columns: 3,
    tools: [["newDoc"], ["open"], ["save", "", true], ["print"], ["preview"], ["saveAs"], ["undo", "", true], ["redo", "", true]]
  },
  {
    label: "Geometry", columns: 3, wide: true, expand: true,
    tools: [
      ["autoline", "Autoline"], ["circle", "Circle"], ["chamfer", "Chamfer"],
      ["rectangle", "Rectangle"], ["arc", "Arc"], ["fillet", "Fillet"],
      ["segment", "Segment"], ["construction", "Construction\nLine"], ["hatch", "Hatch"]
    ]
  },
  {
    label: "Edit", columns: 3, wide: true, expand: true,
    tools: [
      ["trim", "Trim curve"], ["extend", "Extend to next\nobject"], ["split", "Split Curve"],
      ["move", "Move by\nCoordinates"], ["rotate", "Rotate"], ["mirror", "Mirror"],
      ["copy", "Click copy"], ["scale", "Scale"], ["transform", "Transformation\nby displacement"]
    ]
  },
  {
    label: "Di...", columns: 2, expand: true,
    tools: [["dimAuto"], ["diameter"], ["dimLinear"], ["dimRadial"], ["dimBreak"], ["dimAngle"]]
  },
  {
    label: "Symbols", columns: 4, expand: true,
    tools: [
      ["leader"], ["leaderE"], ["roughness"], ["datum"], ["textA"], ["textDown"],
      ["balloon"], ["flag"], ["letterT"], ["table"], ["bolt"], ["target"]
    ]
  },
  {
    label: "Constraints", columns: 4, expand: true,
    tools: [
      ["conAlign"], ["conParallel"], ["conPerp"], ["conTangent"], ["conCollinear"], ["conFan"],
      ["conFix"], ["conCircles"], ["conEnds"], ["conEqual"], ["conTriangle"], ["conHatch"]
    ]
  },
  {
    label: "Dia...", columns: 2, expand: true,
    tools: [["diaLine"], ["diaPoly"], ["diaStar"], ["diaArea"], ["diaHatch"], ["diaAxis"]]
  },
  {
    label: "Ins...", columns: 2, expand: true,
    tools: [["shapes"], ["insView"], ["picture"], ["insRegion"], ["insLayout", "", true], ["insCallout"]]
  },
  {
    label: "Tools", columns: 2,
    tools: [["toolOffset"], ["toolAxis"], ["toolDims"], ["toolBool"], ["toolContour"]]
  },
  { label: "H.", columns: 1, tools: [["holeHatch"], ["holeTop"], ["holeBolt"]] }
];

function RibbonGroup({ group }) {
  return (
    <Group>
      <Tools $columns={group.columns} $wide={group.wide}>
        {group.tools.map(([icon, text, muted]) => (
          <ToolButton key={icon} $muted={muted} aria-label={text ? undefined : icon}>
            <Icon name={icon} />
            {text}
          </ToolButton>
        ))}
      </Tools>
      <GroupFooter>
        <span>{group.label}</span>
        {group.expand && <Caret />}
        <Grip />
      </GroupFooter>
    </Group>
  );
}

function QuickAccess() {
  return (
    <QuickBar>
      <QuickGrip><Grip as="div" $flat /></QuickGrip>
      <QuickButton $active $width="47px" aria-label="Snap"><Icon name="magnet" /><Caret /></QuickButton>
      <QuickDivider $apart />
      <QuickButton aria-label="Parallel"><Icon name="parPerp" /></QuickButton>
      <QuickButton $width="28px" aria-label="Show constraints"><Icon name="eyePar" /></QuickButton>
      <QuickButton $width="28px" aria-label="Show degrees"><Icon name="eyeAxis" /></QuickButton>
      <QuickDivider />
      <QuickButton $width="49px" aria-label="Grid"><Icon name="grid" /><Caret /></QuickButton>
      <QuickField $width="78px">
        <Icon name="axes" />
        <Select aria-label="Coordinate system"><option>CS 0</option></Select>
        <Caret />
      </QuickField>
      <QuickButton $width="30px" $pad="4px" aria-label="Ortho"><Icon name="step" /></QuickButton>
      <QuickButton $active aria-label="Snaps"><Icon name="snaps" /></QuickButton>
      <QuickField $width="70px">
        <Icon name="pitch" />
        <Select aria-label="Cursor step"><option>1</option></Select>
        <Caret />
      </QuickField>
      <QuickButton $width="49px" aria-label="Zoom area"><Icon name="zoomArea" /><Caret /></QuickButton>
      <QuickField $width="71px">
        <Icon name="zoomIn" />
        <ZoomInput aria-label="Scale" defaultValue="0.2285" />
        <Caret />
      </QuickField>
      <Coordinate><span>X</span><input defaultValue="903.4726" /></Coordinate>
      <Coordinate><span>Y</span><input defaultValue="-39.4645" /></Coordinate>
      <QuickButton $width="28px" $pad="2px" aria-label="Pick"><Icon name="dropper" /></QuickButton>
    </QuickBar>
  );
}

function App() {
  return (
    <Page>
      <GlobalStyle />
      <MenuBar>
        <Logo viewBox="0 0 20 20" fill="none" stroke="#009fe3">
          <rect x="1" y="1" width="18" height="18" fill="#26323a" strokeWidth="2" />
          <circle cx="10" cy="10" r="7" strokeWidth="1.4" />
          <path d="M7 5v10 M14 5l-7 6 M9 9l5 7 M3 10l4-3" strokeWidth="1.4" />
        </Logo>
        <MenuList>
          {menus.map(name => (
            <button key={name}>{name}</button>
          ))}
        </MenuList>
        <WindowButtons $after="5px">
          <button aria-label="Window"><Icon name="window" /></button>
          <button aria-label="Display"><Icon name="windowEye" /></button>
        </WindowButtons>
        <SearchField $framed>
          <Icon name="search" />
          <input aria-label="Search commands" placeholder="Search commands (Alt+/)" />
        </SearchField>
        <WindowButtons $gap="5px" $before="7px">
          <button aria-label="Minimize"><Icon name="minimize" /></button>
          <button aria-label="Maximize"><Icon name="maximize" /></button>
          <button aria-label="Close"><Icon name="close" /></button>
        </WindowButtons>
      </MenuBar>
      <TabStrip>
        <HomeButton aria-label="Home"><Icon name="home" /><Caret /></HomeButton>
        <Tab>
          <Icon name="fragment" />
          <Icon name="unsaved" />
          <span>SAMPLE.frw</span>
          <button aria-label="Close tab"><Icon name="close" /></button>
        </Tab>
      </TabStrip>
      <Ribbon>
        <Modes>
          <ModeButton $active><Icon name="fragment" />Drawing</ModeButton>
          <ModeButton><Icon name="management" />Management</ModeButton>
          <ModeButton><Icon name="springs" />Springs</ModeButton>
          <ModeMore aria-label="More"><Icon name="chevrons" /></ModeMore>
        </Modes>
        {groups.map(group => (
          <RibbonGroup key={group.label} group={group} />
        ))}
      </Ribbon>
      <Workspace>
        <SideStrip>
          <SideButton $active aria-label="Tree"><Icon name="tree" /></SideButton>
          <SideButton aria-label="Properties"><Icon name="props" /></SideButton>
          <SideButton aria-label="Variables"><Icon name="fx" /></SideButton>
          <SideButton aria-label="Menu"><Icon name="menu" /></SideButton>
        </SideStrip>
        <Panel>
          <PanelTitle>
            Fragment tree
            <button aria-label="Settings"><Icon name="gear" /></button>
          </PanelTitle>
          <PanelTools>
            <button aria-label="Layers"><Icon name="layer" /></button>
            <button aria-label="Objects"><Icon name="shapes" /></button>
            <button aria-label="Pictures"><Icon name="picture" /></button>
          </PanelTools>
          <LayerPicker>
            <LayerNumber>0</LayerNumber>
            <Select aria-label="Layer"><option>System Layer</option></Select>
            <Caret />
          </LayerPicker>
          <FilterRow>
            <button aria-label="Filter"><Icon name="funnel" /></button>
            <SearchField>
              <Icon name="search" />
              <input aria-label="Search" placeholder="Search (Ctrl+/)" />
            </SearchField>
          </FilterRow>
          <TreeRow $ruled>
            <TreeItem $leaf><Icon name="fragment" />Fragment</TreeItem>
          </TreeRow>
          <TreeRow>
            <TreeItem>
              <Expander aria-label="Expand">▶</Expander>
              <Icon name="folder" />
              Layers (x1)
            </TreeItem>
          </TreeRow>
        </Panel>
        <Canvas>
          <Sheet viewBox="335 144 1063 650" role="img" aria-label="Drilling rig">
            <Ground />
            <Engine />
            <Cabin />
            <Tracks />
            <Boom />
            <Drill />
            <Origin />
          </Sheet>
          <QuickAccess />
        </Canvas>
      </Workspace>
    </Page>
  );
}

export default App;
